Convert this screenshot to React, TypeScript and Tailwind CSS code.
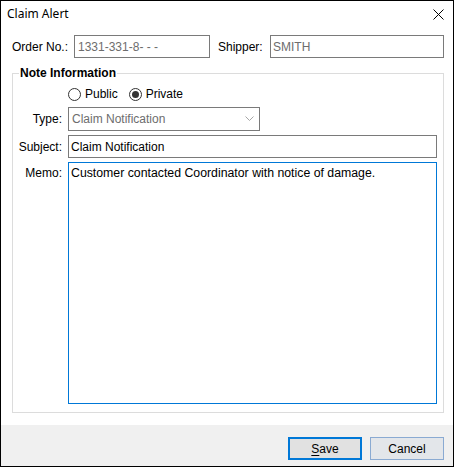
import React from "react";

const font = { fontFamily: '"Liberation Sans", Arial, sans-serif' };

function Radio({ checked, label }: { checked?: boolean; label: string }) {
  return (
    <div className="flex items-center">
      <div className="w-[13px] h-[13px] rounded-full border border-[#333333] bg-white flex items-center justify-center">
        {checked && <div className="w-[7px] h-[7px] rounded-full bg-[#333333]" />}
      </div>
      <span className="ml-[4px] text-[12px] leading-[14px] text-black">{label}</span>
    </div>
  );
}

export default function App() {
  return (
    <div
      className="w-[454px] h-[467px] border border-black bg-white flex flex-col text-[12px] text-black"
      style={font}
    >
      {/* Title bar */}
      <div className="h-[25px] flex items-center justify-between pl-[6px] pr-[9px]">
        <span
          className="text-[12px] leading-[14px] mt-[1px]"
          style={{ fontFamily: '"Noto Sans", "Open Sans", sans-serif' }}
        >
          Claim Alert
        </span>
        <svg width="11" height="11" viewBox="0 0 11 11" className="mt-[1px]">
          <path d="M0.5 0.5 L10.5 10.5 M10.5 0.5 L0.5 10.5" stroke="#000" strokeWidth="1" />
        </svg>
      </div>

      {/* Order / Shipper row */}
      <div className="mt-[9px] flex items-center pl-[11px]">
        <span className="w-[62px] leading-[14px]">Order No.:</span>
        <div className="w-[136px] h-[23px] border border-[#7a7a7a] bg-white flex items-center pl-[3px] text-[#6d6d6d]">
          1331-331-8- - -
        </div>
        <span className="ml-[8px] w-[52px] leading-[14px]">Shipper:</span>
        <div className="w-[174px] h-[23px] border border-[#7a7a7a] bg-white flex items-center pl-[2px] text-[#6d6d6d]">
          SMITH
        </div>
      </div>

      {/* Group box */}
      <div className="relative mt-[15px] ml-[11px] w-[432px] h-[340px] border border-[#dcdcdc] flex flex-col">
        <div className="absolute left-[6px] top-[-8px] bg-white px-[1px] font-bold leading-[14px]">
          Note Information
        </div>

        <div className="mt-[12px] h-[16px] flex items-center pl-[55px]">
          <Radio label="Public" />
          <div className="ml-[11px]">
            <Radio checked label="Private" />
          </div>
        </div>

        <div className="mt-[5px] flex items-center">
          <span className="w-[55px] pr-[6px] text-right leading-[14px]">Type:</span>
          <div className="w-[192px] h-[24px] border border-[#7a7a7a] bg-white flex items-center justify-between pl-[3px] pr-[5px] text-[#6d6d6d]">
            <span>Claim Notification</span>
            <svg width="9" height="6" viewBox="0 0 9 6">
              <path d="M0.5 0.5 L4.5 4.5 L8.5 0.5" stroke="#a6a6a6" strokeWidth="1" fill="none" />
            </svg>
          </div>
        </div>

        <div className="mt-[4px] flex items-center">
          <span className="w-[55px] pr-[6px] text-right leading-[14px]">Subject:</span>
          <div className="w-[369px] h-[23px] border border-[#7a7a7a] bg-white flex items-center pl-[2px]">
            Claim Notification
          </div>
        </div>

        <div className="mt-[4px] flex items-start">
          <span className="w-[55px] pr-[6px] text-right leading-[14px] mt-[4px]">Memo:</span>
          <div className="w-[369px] h-[242px] border border-[#0078d7] bg-white pl-[2px] pt-[3px] leading-[14px] text-[12.3px]">
            Customer contacted Coordinator with notice of damage.
          </div>
        </div>
      </div>

      {/* Footer */}
      <div className="mt-[12px] flex-1 bg-[#f0f0f0] flex justify-end items-start pt-[12px] pr-[9px] gap-[8px]">
        <button className="w-[74px] h-[23px] border-2 border-[#0078d7] bg-[#e1e1e1] flex items-center justify-center text-[12px] leading-[14px]">
          <span>
            <span className="underline underline-offset-2">S</span>ave
          </span>
        </button>
        <button className="w-[74px] h-[23px] border border-[#8aaad2] bg-[#e3e6ea] flex items-center justify-center text-[12px] leading-[14px]">
          Cancel
        </button>
      </div>
    </div>
  );
}
